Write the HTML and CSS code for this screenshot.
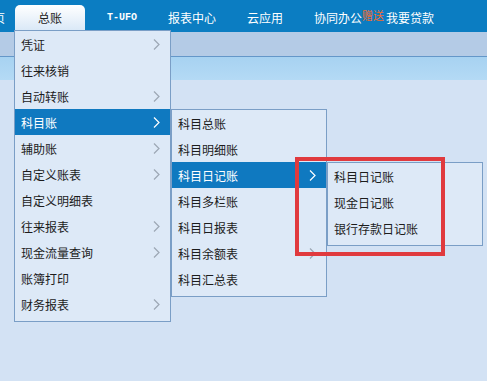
FILE: index.html
```html
<!DOCTYPE html>
<html lang="zh-CN">

<head>
    <meta charset="UTF-8">
    <meta name="viewport" content="width=device-width, initial-scale=1.0">
    <title>总账</title>
    <link rel="stylesheet" href="styles.css">
</head>

<body>
    <header class="topbar">
        <nav class="nav">
            <span class="nav-cut">页</span>
            <span class="tab">总账</span>
            <span class="nav-item mono">T-UFO</span>
            <span class="nav-item">报表中心</span>
            <span class="nav-item">云应用</span>
            <span class="nav-item">协同办公<em class="gift">赠送</em>我要贷款</span>
        </nav>
    </header>
    <div class="band"></div>
    <div class="band2"></div>

    <ul class="menu main-menu">
        <li class="item"><span class="label">凭证</span><svg class="chev" viewBox="0 0 7 11"><polyline points="1,0.5 6,5.5 1,10.5" /></svg></li>
        <li class="item"><span class="label">往来核销</span></li>
        <li class="item"><span class="label">自动转账</span><svg class="chev" viewBox="0 0 7 11"><polyline points="1,0.5 6,5.5 1,10.5" /></svg></li>
        <li class="item active"><span class="label">科目账</span><svg class="chev" viewBox="0 0 7 11"><polyline points="1,0.5 6,5.5 1,10.5" /></svg>
            <ul class="menu sub">
                <li class="item"><span class="label">科目总账</span></li>
                <li class="item"><span class="label">科目明细账</span></li>
                <li class="item active"><span class="label">科目日记账</span><svg class="chev" viewBox="0 0 7 11"><polyline points="1,0.5 6,5.5 1,10.5" /></svg>
                    <ul class="menu sub">
                        <li class="item"><span class="label">科目日记账</span></li>
                        <li class="item"><span class="label">现金日记账</span></li>
                        <li class="item"><span class="label">银行存款日记账</span></li>
                    </ul>
                </li>
                <li class="item"><span class="label">科目多栏账</span></li>
                <li class="item"><span class="label">科目日报表</span></li>
                <li class="item"><span class="label">科目余额表</span><svg class="chev" viewBox="0 0 7 11"><polyline points="1,0.5 6,5.5 1,10.5" /></svg></li>
                <li class="item"><span class="label">科目汇总表</span></li>
            </ul>
        </li>
        <li class="item"><span class="label">辅助账</span><svg class="chev" viewBox="0 0 7 11"><polyline points="1,0.5 6,5.5 1,10.5" /></svg></li>
        <li class="item"><span class="label">自定义账表</span><svg class="chev" viewBox="0 0 7 11"><polyline points="1,0.5 6,5.5 1,10.5" /></svg></li>
        <li class="item"><span class="label">自定义明细表</span></li>
        <li class="item"><span class="label">往来报表</span><svg class="chev" viewBox="0 0 7 11"><polyline points="1,0.5 6,5.5 1,10.5" /></svg></li>
        <li class="item"><span class="label">现金流量查询</span><svg class="chev" viewBox="0 0 7 11"><polyline points="1,0.5 6,5.5 1,10.5" /></svg></li>
        <li class="item"><span class="label">账簿打印</span></li>
        <li class="item"><span class="label">财务报表</span><svg class="chev" viewBox="0 0 7 11"><polyline points="1,0.5 6,5.5 1,10.5" /></svg></li>
    </ul>

    <div class="highlight"></div>
</body>

</html>
```

FILE: styles.css
```css
body {
    margin: 0;
    padding: 0;
    height: 381px;
    overflow: hidden;
    background-color: #d3e2f4;
    font-family: "Noto Sans CJK SC", "Noto Sans", sans-serif;
    font-size: 12px;
    color: #1c1c1c;
}

.topbar {
    background-color: #0b7dc2;
    height: 32px;
}

.nav {
    display: flex;
    align-items: flex-end;
    height: 31px;
    overflow: hidden;
    color: #fff;
    white-space: nowrap;
}

.nav-cut {
    margin-left: -7px;
    line-height: 26px;
}

.tab {
    margin-left: 10px;
    width: 70px;
    height: 26px;
    line-height: 26px;
    text-align: center;
    color: #222;
    background: linear-gradient(#ffffff, #d9e8f7);
    border-radius: 5px 5px 0 0;
}

.nav-item {
    margin-left: 31px;
    line-height: 26px;
}

.nav-item.mono {
    margin-left: 22px;
    font-family: "Liberation Mono", monospace;
    font-size: 10px;
    font-weight: bold;
}

.gift {
    font-style: normal;
    font-size: 11px;
    color: #f26b2c;
    position: relative;
    top: -3px;
    margin-right: 2px;
}

.band {
    height: 24px;
    background-color: #b4cbe6;
    border-bottom: 1px solid #6497c9;
}

.band2 {
    height: 23px;
    background: linear-gradient(#a7d2f1, #b4daf5);
}

.menu {
    list-style: none;
    margin: 0;
    padding: 0 0 4px 0;
    background-color: #dde9f7;
    border: 1px solid #7a9ec6;
    box-sizing: border-box;
}

.main-menu {
    position: absolute;
    left: 14px;
    top: 30px;
    width: 157px;
}

.sub {
    position: absolute;
    left: calc(100% + 1px);
    top: 0;
    width: 156px;
}

.item {
    position: relative;
    display: flex;
    align-items: center;
    height: 26px;
    padding: 0 10px 0 6px;
    color: #1c1c1c;
}

.item .label {
    flex: 1;
}

.chev {
    width: 7px;
    height: 11px;
    fill: none;
    stroke: #9ca7b4;
    stroke-width: 1.2;
}

.item.active {
    background-color: #0f79c0;
}

.item.active > .label {
    color: #fff;
}

.item.active > .chev {
    stroke: #fff;
}

.highlight {
    position: absolute;
    left: 295px;
    top: 157px;
    width: 150px;
    height: 99px;
    box-sizing: border-box;
    border: 4px solid #e03a3e;
    z-index: 10;
}
```
